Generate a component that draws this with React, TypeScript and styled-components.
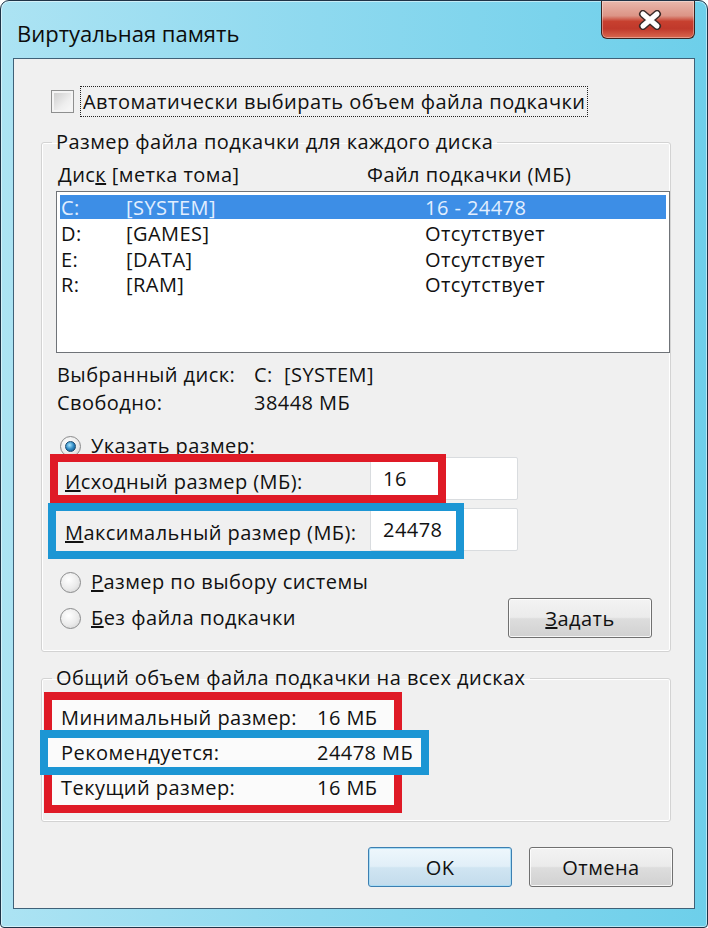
import React from "react";
import styled, { createGlobalStyle, css } from "styled-components";

const RED = "#df1a26";
const BLUE = "#1c96d4";

const GlobalStyle = createGlobalStyle`
  html, body {
    margin: 0;
    padding: 0;
    background: #ffffff;
  }
  body {
    font-family: "Open Sans", "Noto Sans", sans-serif;
    color: #111;
  }
  * {
    box-sizing: border-box;
  }
`;

const Window = styled.div`
  width: 708px;
  height: 928px;
  display: flex;
  flex-direction: column;
  padding: 0 12px 18px 12px;
  border: 1px solid #1f3347;
  border-radius: 9px 9px 4px 4px;
  background: linear-gradient(to right, #ace3f3 0%, #8ed9ef 45%, #6dcfea 100%);
  box-shadow: inset 0 0 0 1px rgba(255, 255, 255, 0.5);
`;

const TitleBar = styled.div`
  height: 57px;
  display: flex;
  align-items: flex-start;
`;

const Title = styled.div`
  margin-top: 17px;
  padding-left: 4px;
  font-size: 22px;
  line-height: 30px;
  color: #0c0c0c;
`;

const CloseButton = styled.div`
  margin-left: auto;
  width: 94px;
  height: 38px;
  display: flex;
  align-items: center;
  justify-content: center;
  padding-left: 4px;
  border: 1px solid #3b2420;
  border-top: none;
  border-radius: 0 0 6px 6px;
  background: linear-gradient(
    to bottom,
    #e9b8ad 0%,
    #dc9486 40%,
    #c7402f 55%,
    #c0392b 75%,
    #d9684f 100%
  );
  box-shadow: inset 0 0 0 1px rgba(255, 255, 255, 0.35);
`;

const Client = styled.div`
  flex: 1;
  display: flex;
  flex-direction: column;
  background: #f0f0f0;
  border: 1px solid #3f6178;
  font-size: 20px;
  letter-spacing: 0.45px;
`;

const CheckRow = styled.div`
  margin: 27px 0 0 37px;
  height: 31px;
  display: flex;
  align-items: center;
  gap: 6px;
`;

const CheckBox = styled.span`
  width: 23px;
  height: 23px;
  border: 1px solid #8e8f8f;
  background: linear-gradient(135deg, #c9c9c9 0%, #eeeeee 60%, #fafafa 100%);
  box-shadow: inset 0 0 0 2px #f4f4f4;
`;

const FocusLabel = styled.span`
  height: 31px;
  padding: 0 2px;
  display: flex;
  align-items: center;
  border: 1px dotted #222;
  line-height: 1;
`;

const Group = styled.fieldset`
  margin: 0 23px 0 27px;
  padding: 0 0 13px 0;
  min-width: 0;
  border: 1px solid #d3d3d3;
  border-radius: 3px;
  box-shadow: inset 0 0 0 1px #ffffff;
`;

const Legend = styled.legend`
  margin-left: 10px;
  padding: 0 4px;
  line-height: 24px;
`;

const Columns = styled.div`
  margin: 9px 0 0 16px;
  display: grid;
  grid-template-columns: 309px 1fr;
  line-height: 24px;
`;

const ListBox = styled.div`
  margin: 4px 0 0 14px;
  height: 162px;
  padding: 3px;
  background: #ffffff;
  border: 1px solid #6f7378;
`;

const ListRow = styled.div<{ $selected?: boolean }>`
  height: 25.5px;
  display: grid;
  grid-template-columns: 65px 299px 1fr;
  align-items: center;
  padding: 2px 0 0 1px;
  line-height: 1;
  ${(p) =>
    p.$selected &&
    css`
      height: 24px;
      margin-bottom: 1.5px;
      background: #3d8ee6;
      color: #e2eeff;
    `}
`;

const Info = styled.div`
  margin: 8px 0 0 15px;
  display: grid;
  grid-template-columns: 197px 1fr;
  line-height: 28px;
`;

const RadioRow = styled.div<{ $top: number }>`
  margin: ${(p) => p.$top}px 0 0 18px;
  height: 22px;
  display: flex;
  align-items: center;
  gap: 10px;
  line-height: 1;
`;

const Radio = styled.span<{ $checked?: boolean }>`
  position: relative;
  flex: none;
  width: 21px;
  height: 21px;
  border-radius: 50%;
  border: 1px solid #8a8b8c;
  background: radial-gradient(circle at 40% 35%, #ffffff 0%, #ebebeb 55%, #cdcdcd 100%);
  ${(p) =>
    p.$checked &&
    css`
      &::after {
        content: "";
        position: absolute;
        inset: 4px;
        border-radius: 50%;
        border: 1px solid #1b4a6e;
        background: radial-gradient(circle at 40% 35%, #a8e6ff 0%, #2f8ac4 50%, #0e4673 100%);
      }
    `}
`;

const InputRow = styled.div<{ $top: number }>`
  position: relative;
  margin: ${(p) => p.$top}px 0 0 8px;
  width: 476px;
  height: 43px;
  display: grid;
  grid-template-columns: 320px 148px;
  align-items: center;
`;

const FieldLabel = styled.span`
  padding: 5px 0 0 15px;
  white-space: nowrap;
`;

const TextBox = styled.div`
  height: 43px;
  padding-left: 12px;
  display: flex;
  align-items: center;
  background: #ffffff;
  border: 1px solid #d9dcdf;
  border-radius: 2px;
  line-height: 1;
`;

const Frame = styled.span<{
  $color: string;
  $top: number;
  $left: number;
  $width: number;
  $height: number;
  $fill?: boolean;
}>`
  position: absolute;
  top: ${(p) => p.$top}px;
  left: ${(p) => p.$left}px;
  width: ${(p) => p.$width}px;
  height: ${(p) => p.$height}px;
  border: 8px solid ${(p) => p.$color};
  background: ${(p) => (p.$fill ? "#fbfbfb" : "transparent")};
  z-index: ${(p) => (p.$fill ? 0 : 2)};
  pointer-events: none;
`;

const ActionRow = styled.div`
  margin: 5px 18px 0 0;
  display: flex;
  align-items: center;
  justify-content: space-between;
`;

const Button = styled.button<{ $default?: boolean }>`
  width: 144px;
  height: 40px;
  padding: 0;
  font: inherit;
  font-size: 20px;
  letter-spacing: 0.45px;
  color: #111;
  border: 1px solid #707070;
  border-radius: 3px;
  background: linear-gradient(to bottom, #f3f3f3 0%, #ebebeb 48%, #dddddd 52%, #d1d1d1 100%);
  box-shadow: inset 0 0 0 1px rgba(255, 255, 255, 0.8);
  ${(p) =>
    p.$default &&
    css`
      border-color: #3c7fb1;
      background: linear-gradient(to bottom, #eef7fc 0%, #e1eff8 48%, #d0e5f2 52%, #c3dcec 100%);
      box-shadow: inset 0 0 0 1px #a8dcf5;
    `}
`;

const Stats = styled.div`
  margin: 2px 0 0 2px;
  width: 358px;
  border: 8px solid ${RED};
  background: #fbfbfb;
`;

const StatRow = styled.div`
  position: relative;
  height: 35px;
  padding-left: 9px;
  display: grid;
  grid-template-columns: 256px 1fr;
  align-items: center;
  line-height: 1;
  white-space: nowrap;

  & > span:not(:last-child),
  & > span:nth-child(2) {
    position: relative;
    z-index: 1;
  }
`;

const Footer = styled.div`
  margin: 25px 21px 19px 0;
  display: flex;
  justify-content: flex-end;
  gap: 17px;
`;

const CloseIcon = () => (
  <svg width="28" height="20" viewBox="0 0 28 20">
    <g strokeLinecap="round">
      <path d="M7 4 L21 16 M21 4 L7 16" stroke="#3a2a28" strokeWidth="8" />
      <path d="M7 4 L21 16 M21 4 L7 16" stroke="#ffffff" strokeWidth="5" />
    </g>
  </svg>
);

const drives = [
  { drive: "C:", label: "[SYSTEM]", size: "16 - 24478", selected: true },
  { drive: "D:", label: "[GAMES]", size: "Отсутствует" },
  { drive: "E:", label: "[DATA]", size: "Отсутствует" },
  { drive: "R:", label: "[RAM]", size: "Отсутствует" },
];

export default function App() {
  return (
    <>
      <GlobalStyle />
      <Window>
        <TitleBar>
          <Title>Виртуальная память</Title>
          <CloseButton>
            <CloseIcon />
          </CloseButton>
        </TitleBar>
        <Client>
          <CheckRow>
            <CheckBox />
            <FocusLabel>Автоматически выбирать объем файла подкачки</FocusLabel>
          </CheckRow>

          <Group style={{ marginTop: 13 }}>
            <Legend>Размер файла подкачки для каждого диска</Legend>
            <Columns>
              <span>
                Дис<u>к</u> [метка тома]
              </span>
              <span>Файл подкачки (МБ)</span>
            </Columns>
            <ListBox>
              {drives.map((d) => (
                <ListRow key={d.drive} $selected={d.selected}>
                  <span>{d.drive}</span>
                  <span>{d.label}</span>
                  <span>{d.size}</span>
                </ListRow>
              ))}
            </ListBox>
            <Info>
              <span>Выбранный диск:</span>
              <span>C:&nbsp;&nbsp;[SYSTEM]</span>
              <span>Свободно:</span>
              <span>38448 МБ</span>
            </Info>
            <RadioRow $top={18}>
              <Radio $checked />
              <span>Указать размер:</span>
            </RadioRow>
            <InputRow $top={0}>
              <FieldLabel>
                <u>И</u>сходный размер (МБ):
              </FieldLabel>
              <TextBox>16</TextBox>
              <Frame $color={RED} $top={-3} $left={0} $width={396} $height={49} />
            </InputRow>
            <InputRow $top={8}>
              <FieldLabel>
                <u>М</u>аксимальный размер (МБ):
              </FieldLabel>
              <TextBox>24478</TextBox>
              <Frame $color={BLUE} $top={-5} $left={-2} $width={416} $height={56} />
            </InputRow>
            <RadioRow $top={20}>
              <Radio />
              <span>
                <u>Р</u>азмер по выбору системы
              </span>
            </RadioRow>
            <ActionRow>
              <RadioRow $top={0}>
                <Radio />
                <span>
                  <u>Б</u>ез файла подкачки
                </span>
              </RadioRow>
              <Button>
                <u>З</u>адать
              </Button>
            </ActionRow>
          </Group>

          <Group style={{ marginTop: 14, paddingBottom: 8 }}>
            <Legend>Общий объем файла подкачки на всех дисках</Legend>
            <Stats>
              <StatRow>
                <span>Минимальный размер:</span>
                <span>16 МБ</span>
              </StatRow>
              <StatRow>
                <span>Рекомендуется:</span>
                <span>24478 МБ</span>
                <Frame
                  $color={BLUE}
                  $fill
                  $top={-5}
                  $left={-12}
                  $width={389}
                  $height={45}
                />
              </StatRow>
              <StatRow>
                <span>Текущий размер:</span>
                <span>16 МБ</span>
              </StatRow>
            </Stats>
          </Group>

          <Footer>
            <Button $default>OK</Button>
            <Button>Отмена</Button>
          </Footer>
        </Client>
      </Window>
    </>
  );
}
